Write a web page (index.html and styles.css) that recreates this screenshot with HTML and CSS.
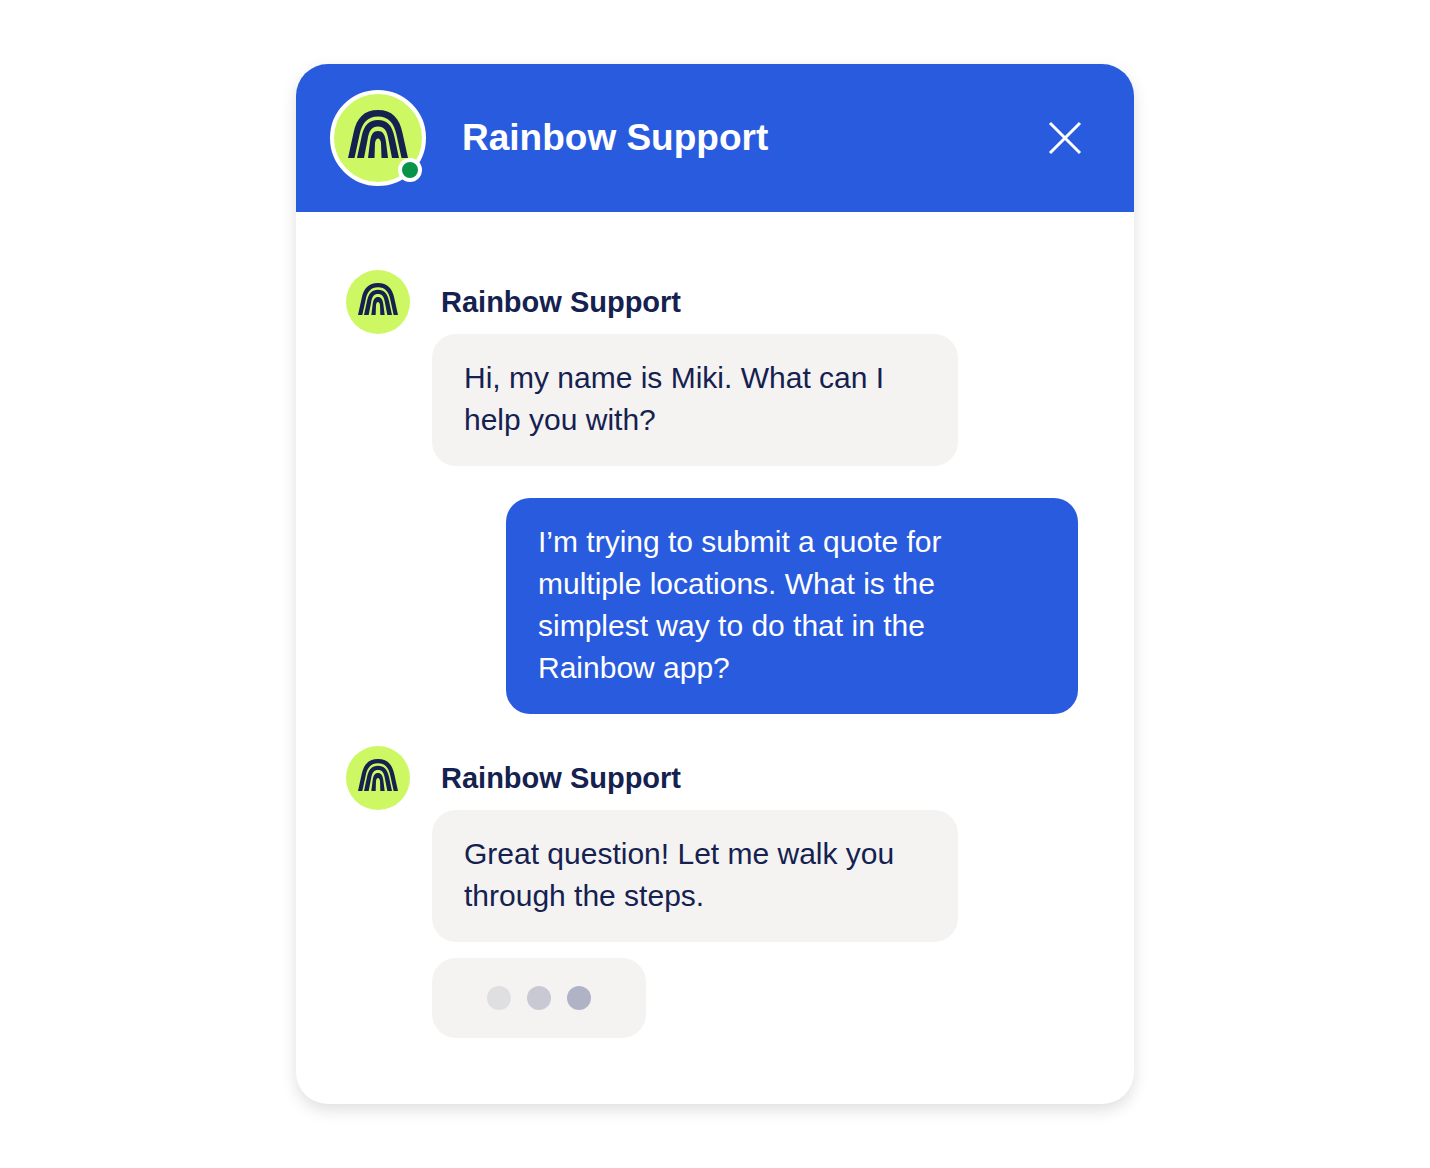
FILE: index.html
```html
<!DOCTYPE html>
<html lang="en">
<head>
<meta charset="utf-8">
<meta name="viewport" content="width=device-width, initial-scale=1">
<title>Rainbow Support</title>
<link rel="stylesheet" href="styles.css">
</head>
<body>
<svg class="sprite" aria-hidden="true">
  <symbol id="rainbow" viewBox="0 0 60 48">
    <path d="M0 48 L5.500 23 C8.500 8 16 0 30 0 S51.500 8 54.500 23 L60 48 H53.500 L48.500 25 C46 13 40.500 6.500 30 6.500 S14 13 11.500 25 L6.500 48Z"/>
    <path d="M9 48 L13.500 27 C16 15 21 10 30 10 S44 15 46.500 27 L51 48 H44 L40.500 30 C39 20 36 16.500 30 16.500 S21 20 19.500 30 L16 48Z"/>
    <path d="M20 48 L22 32 C23 24 25.500 21 30 21 S37 24 38 32 L40 48 H33.500 L33 33 C32.500 30 31.500 28.500 30 28.500 S27.500 30 27 33 L26.500 48Z"/>
  </symbol>
</svg>
<main class="chat">
  <header class="chat-header">
    <div class="avatar avatar-large">
      <svg class="logo" aria-hidden="true"><use href="#rainbow"/></svg>
      <span class="status"></span>
    </div>
    <h1 class="chat-title">Rainbow Support</h1>
    <button class="close" type="button" aria-label="Close chat">
      <svg class="close-icon" viewBox="0 0 34 34" aria-hidden="true"><path d="M2 2 32 32M32 2 2 32"/></svg>
    </button>
  </header>
  <div class="messages">
    <section class="group">
      <div class="sender">
        <div class="avatar"><svg class="logo" aria-hidden="true"><use href="#rainbow"/></svg></div>
        <h2 class="sender-name">Rainbow Support</h2>
      </div>
      <p class="bubble">Hi, my name is Miki. What can I help you with?</p>
    </section>
    <p class="bubble bubble-own">I’m trying to submit a quote for multiple locations. What is the simplest way to do that in the Rainbow app?</p>
    <section class="group">
      <div class="sender">
        <div class="avatar"><svg class="logo" aria-hidden="true"><use href="#rainbow"/></svg></div>
        <h2 class="sender-name">Rainbow Support</h2>
      </div>
      <p class="bubble">Great question! Let me walk you through the steps.</p>
      <div class="typing" role="status" aria-label="Typing">
        <span class="dot dot-light"></span>
        <span class="dot dot-medium"></span>
        <span class="dot"></span>
      </div>
    </section>
  </div>
</main>
</body>
</html>
```
FILE: styles.css
```css
:root {
  --blue: #295bde;
  --navy: #15214f;
  --lime: #cef863;
  --grey: #f4f3f2;
}

* {
  box-sizing: border-box;
}

body {
  margin: 0;
  padding: 64px 24px;
  background: #fff;
  color: var(--navy);
  font: 30px/42px "Liberation Sans", Arial, sans-serif;
}

h1,
h2,
p {
  margin: 0;
}

.sprite {
  position: absolute;
  width: 0;
  height: 0;
}

.chat {
  max-width: 838px;
  margin: 0 auto;
  border-radius: 32px;
  background: #fff;
  box-shadow: 0 6px 16px rgba(0, 0, 0, 0.13);
  overflow: hidden;
}

.chat-header {
  display: flex;
  align-items: center;
  gap: 36px;
  padding: 26px 52px 26px 34px;
  background: var(--blue);
  color: #fff;
}

.avatar {
  display: flex;
  flex: none;
  justify-content: center;
  width: 64px;
  height: 64px;
  padding-top: 13px;
  border-radius: 50%;
  background: var(--lime);
}

.logo {
  width: 40px;
  height: 32px;
  fill: var(--navy);
}

.avatar-large {
  position: relative;
  width: 96px;
  height: 96px;
  padding-top: 16px;
  border: 4px solid #fff;
}

.avatar-large .logo {
  width: 60px;
  height: 48px;
}

.status {
  position: absolute;
  right: 0;
  bottom: 0;
  width: 24px;
  height: 24px;
  border: 4px solid #fff;
  border-radius: 50%;
  background: #079448;
}

.chat-title {
  flex: 1;
  font-size: 37px;
  line-height: 42px;
}

.close {
  display: flex;
  padding: 0;
  border: 0;
  background: none;
  color: inherit;
  cursor: pointer;
}

.close-icon {
  width: 34px;
  height: 34px;
  fill: none;
  stroke: currentColor;
  stroke-width: 3;
}

.messages {
  display: flex;
  flex-direction: column;
  gap: 32px;
  padding: 58px 56px 66px 50px;
}

.sender {
  display: flex;
  align-items: center;
  gap: 31px;
}

.sender-name {
  font-size: 29px;
  line-height: 42px;
}

.bubble {
  max-width: 526px;
  margin-left: 86px;
  padding: 23px 32px 25px;
  border-radius: 24px;
  background: var(--grey);
}

.bubble-own {
  align-self: flex-end;
  max-width: 572px;
  margin-left: 0;
  padding-right: 64px;
  background: var(--blue);
  color: #fff;
}

.typing {
  display: flex;
  align-items: center;
  justify-content: center;
  gap: 16px;
  width: 214px;
  height: 80px;
  margin: 16px 0 0 86px;
  border-radius: 24px;
  background: var(--grey);
}

.dot {
  width: 24px;
  height: 24px;
  border-radius: 50%;
  background: #b0b3c6;
}

.dot-light {
  background: #dfdfe2;
}

.dot-medium {
  background: #c8c9d2;
}
```
